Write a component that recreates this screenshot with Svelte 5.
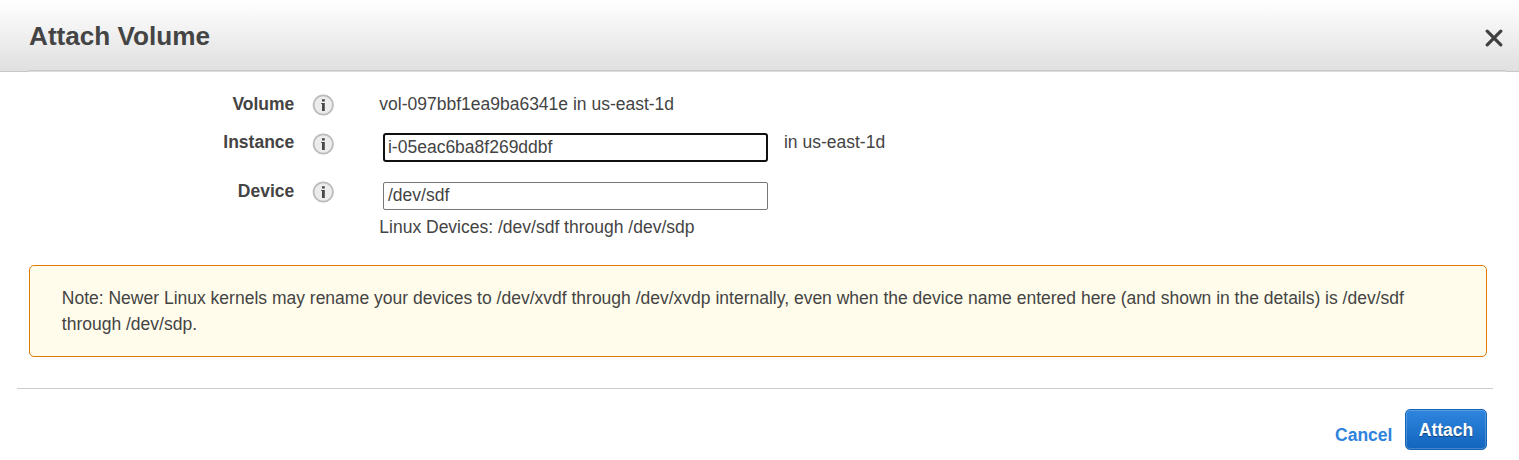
<script>
  let instance = $state('i-05eac6ba8f269ddbf');
  let device = $state('/dev/sdf');
</script>

{#snippet info()}
  <svg class="info" width="22" height="22" viewBox="0 0 22 22" aria-hidden="true">
    <circle cx="11.3" cy="11" r="9.7" fill="#ececec" stroke="#bcbcbc" stroke-width="1.8" />
    <path d="M10 5.2h2.8v2.2H10zM9.2 9h3.6v8H10v-6.9h-.8z" fill="#484848" />
  </svg>
{/snippet}

<div class="dialog">
  <header>
    <h1>Attach Volume</h1>
    <button class="close" aria-label="Close">
      <svg width="18" height="18" viewBox="0 0 18 18">
        <path d="M2.2 2.2L15.8 15.8M15.8 2.2L2.2 15.8" stroke="#404040" stroke-width="3.2" stroke-linecap="round" />
      </svg>
    </button>
  </header>

  <div class="form">
    <div class="row volume">
      <span class="label">Volume</span>
      {@render info()}
      <span class="value">vol-097bbf1ea9ba6341e in us-east-1d</span>
    </div>
    <div class="row instance">
      <label class="label" for="instance">Instance</label>
      {@render info()}
      <input id="instance" class="focused" bind:value={instance} spellcheck="false" />
      <span class="zone">in us-east-1d</span>
    </div>
    <div class="row device">
      <label class="label" for="device">Device</label>
      {@render info()}
      <input id="device" bind:value={device} spellcheck="false" />
    </div>
    <div class="hint">Linux Devices: /dev/sdf through /dev/sdp</div>
  </div>

  <div class="note">
    Note: Newer Linux kernels may rename your devices to /dev/xvdf through /dev/xvdp internally, even when the device name entered here (and shown in the details) is /dev/sdf through /dev/sdp.
  </div>

  <footer>
    <button class="cancel">Cancel</button>
    <button class="attach">Attach</button>
  </footer>
</div>

<style>
  :global(body) {
    margin: 0;
    background: #fff;
    overflow: hidden;
  }
  .dialog {
    box-sizing: border-box;
    height: 460px;
    font: 17.5px/26px "Liberation Sans", Arial, sans-serif;
    color: #444;
  }
  header {
    box-sizing: border-box;
    height: 72px;
    padding: 0 16px 0 29px;
    display: flex;
    justify-content: space-between;
    align-items: flex-start;
    background:
      linear-gradient(#c8c8c8, #c8c8c8) 29px 70px / calc(100% - 42px) 1px no-repeat,
      linear-gradient(#ddd, #ddd) 29px 71px / calc(100% - 42px) 1px no-repeat,
      linear-gradient(#c8c8c8, #c8c8c8) 0 71px / 100% 1px no-repeat,
      linear-gradient(#fff, #dfdfdf);
  }
  h1 {
    margin: 21px 0 0;
    font-size: 26.15px;
    line-height: 30px;
    font-weight: bold;
  }
  button {
    font: inherit;
    border: 0;
    padding: 0;
    background: none;
    cursor: pointer;
  }
  .close {
    margin-top: 29px;
    height: 18px;
    line-height: 0;
  }
  .form {
    height: 193px;
  }
  .row {
    display: flex;
    align-items: flex-start;
  }
  .volume {
    height: 39px;
    padding-top: 19px;
    box-sizing: border-box;
  }
  .instance {
    height: 49px;
    padding-top: 18px;
    box-sizing: border-box;
  }
  .device {
    height: 54px;
    padding-top: 18px;
    box-sizing: border-box;
  }
  .label {
    width: 294.3px;
    text-align: right;
    font-weight: bold;
  }
  .info {
    flex: none;
    margin: 3px 0 0 17.7px;
  }
  .instance .info {
    margin-top: 4px;
  }
  .value {
    margin-left: 45.3px;
  }
  input {
    box-sizing: border-box;
    width: 385px;
    height: 28px;
    margin: 4px 0 0 49px;
    padding: 0 4px 1px;
    border: 1px solid #767676;
    border-radius: 2px;
    font: inherit;
    color: #444;
    outline: none;
    background: #fff;
  }
  input.focused {
    height: 29px;
    border: 2px solid #101010;
    border-radius: 3px;
    padding: 0 3px 1px;
  }
  .zone {
    margin-left: 16px;
  }
  .hint {
    padding-left: 379.3px;
  }
  .note {
    box-sizing: border-box;
    height: 92px;
    margin: 0 32px 0 29px;
    padding: 19px 31px 0 31.8px;
    border: 1px solid #dd7b09;
    border-radius: 5px;
    background: #fffceb;
  }
  footer {
    margin: 31px 26px 0 17px;
    padding: 20px 6px 0 0;
    border-top: 1px solid #ccc;
    display: flex;
    justify-content: flex-end;
    align-items: flex-start;
    font-weight: bold;
  }
  .cancel {
    margin: 13px 12.6px 0 0;
    color: #2e83dc;
  }
  .attach {
    box-sizing: border-box;
    width: 82px;
    height: 41px;
    border: 1px solid #1763b4;
    border-radius: 5px;
    background: linear-gradient(#2f86de, #1264bd);
    box-shadow: inset 0 0 0 1px rgba(255, 255, 255, 0.2);
    color: #fff;
    text-shadow: 0 1px 1px rgba(0, 0, 0, 0.4);
  }
</style>
